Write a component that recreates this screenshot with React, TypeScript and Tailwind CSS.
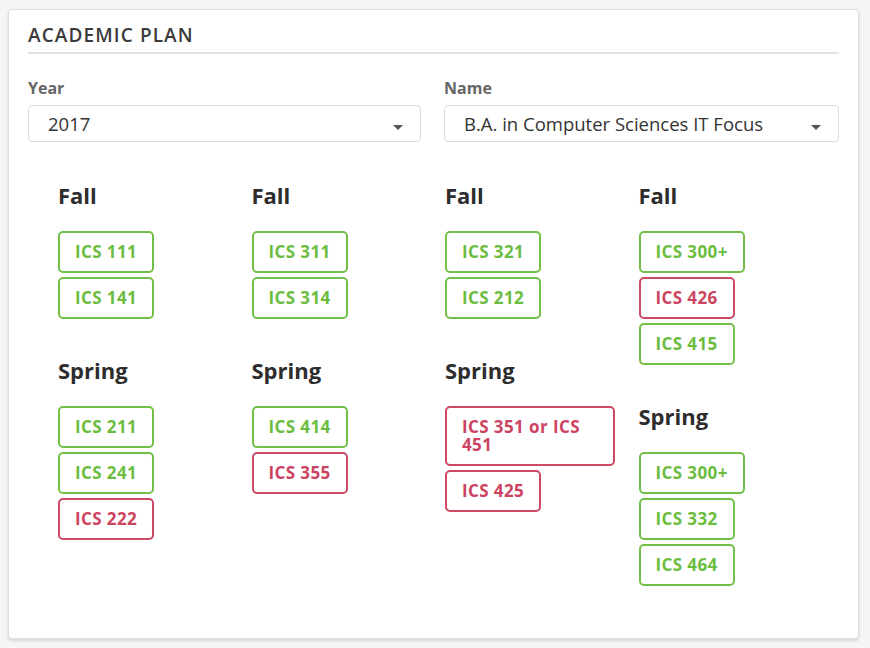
import React from "react";

type Course = { name: string; bad?: boolean };
type Term = { term: string; courses: Course[] };

const columns: Term[][] = [
  [
    { term: "Fall", courses: [{ name: "ICS 111" }, { name: "ICS 141" }] },
    { term: "Spring", courses: [{ name: "ICS 211" }, { name: "ICS 241" }, { name: "ICS 222", bad: true }] },
  ],
  [
    { term: "Fall", courses: [{ name: "ICS 311" }, { name: "ICS 314" }] },
    { term: "Spring", courses: [{ name: "ICS 414" }, { name: "ICS 355", bad: true }] },
  ],
  [
    { term: "Fall", courses: [{ name: "ICS 321" }, { name: "ICS 212" }] },
    { term: "Spring", courses: [{ name: "ICS 351 or ICS 451", bad: true }, { name: "ICS 425", bad: true }] },
  ],
  [
    { term: "Fall", courses: [{ name: "ICS 300+" }, { name: "ICS 426", bad: true }, { name: "ICS 415" }] },
    { term: "Spring", courses: [{ name: "ICS 300+" }, { name: "ICS 332" }, { name: "ICS 464" }] },
  ],
];

function Select({ value }: { value: string }) {
  return (
    <div className="relative h-[37px] rounded-[4px] border border-[#dcdcdc] bg-white flex items-center pl-[19px] text-[18.5px] text-[#333]" style={{ fontFamily: '"Open Sans", sans-serif' }}>
      <span>{value}</span>
      <span className="absolute right-[17px] top-[19px] w-0 h-0 border-l-[5px] border-r-[5px] border-t-[5px] border-l-transparent border-r-transparent border-t-[#555]" />
    </div>
  );
}

export default function App() {
  return (
    <div className="w-[870px] h-[648px] bg-[#f5f5f5] pt-[9px] pl-[8px]">
      <div className="w-[851px] h-[630px] bg-white rounded-[4px] border border-[#dedede] shadow-[0_2px_3px_rgba(0,0,0,0.12)] px-[19px] pt-[13px]">
        <div
          className="text-[19px] leading-[24px] text-[#3b3b3b] tracking-[1.1px] pb-[5px] border-b-2 border-[#e2e2e2]"
          style={{ fontFamily: '"Open Sans", sans-serif', fontWeight: 600 }}
        >
          ACADEMIC PLAN
        </div>
        <div className="flex gap-[23px] mt-[24px]">
          <div className="w-[394px]">
            <div className="text-[16px] leading-[20px] font-bold text-[#666] mb-[7px]" style={{ fontFamily: '"Open Sans", sans-serif' }}>Year</div>
            <Select value="2017" />
          </div>
          <div className="w-[396px]">
            <div className="text-[16px] leading-[20px] font-bold text-[#666] mb-[7px]" style={{ fontFamily: '"Open Sans", sans-serif' }}>Name</div>
            <Select value="B.A. in Computer Sciences IT Focus" />
          </div>
        </div>
        <div className="flex gap-[23.5px] pl-[30px] mt-[2px]">
          {columns.map((col, ci) => (
            <div key={ci} className="w-[170px] flex flex-col">
              {col.map((t, ti) => (
                <div key={ti} className="flex flex-col items-start">
                  <div
                    className="text-[22px] leading-[30px] font-bold text-[#2d2d2d] mt-[36px] mb-[21px]"
                    style={{ fontFamily: '"Open Sans", sans-serif' }}
                  >
                    {t.term}
                  </div>
                  <div className="flex flex-col gap-[4px] items-start">
                    {t.courses.map((c, i) => (
                      <div
                        key={i}
                        className={
                          "rounded-[5px] border-2 px-[15px] py-[10px] text-[17px] leading-[18px] tracking-[0.4px] font-bold max-w-[170px] " +
                          (c.bad ? "border-[#cd4a66] text-[#cc4462]" : "border-[#72c047] text-[#6cbd3f]")
                        }
                        style={{ fontFamily: '"Open Sans", sans-serif' }}
                      >
                        {c.name}
                      </div>
                    ))}
                  </div>
                </div>
              ))}
            </div>
          ))}
        </div>
      </div>
    </div>
  );
}
